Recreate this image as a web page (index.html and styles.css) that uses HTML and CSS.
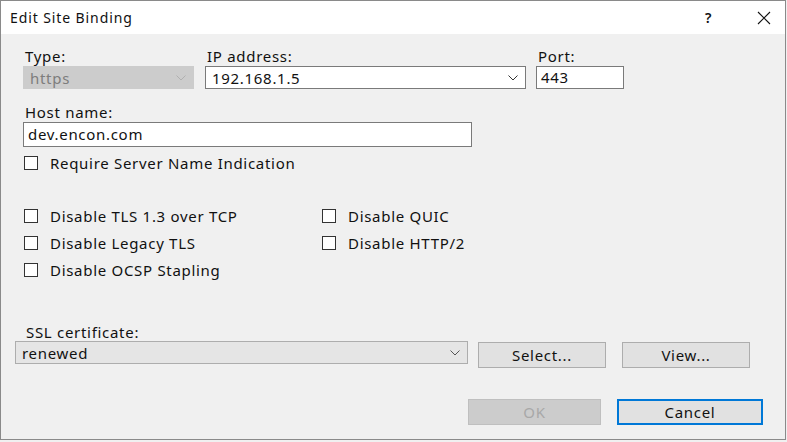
FILE: index.html
```html
<!DOCTYPE html>
<html>
<head>
<meta charset="utf-8">
<link rel="stylesheet" href="styles.css">
</head>
<body>
<div class="window">
  <div class="titlebar">
    <span class="title">Edit Site Binding</span>
    <span class="help">?</span>
    <span class="close">
      <svg width="14" height="14" viewBox="0 0 14 14"><path d="M1 1 L13 13 M13 1 L1 13" stroke="#111" stroke-width="1.1" fill="none"/></svg>
    </span>
  </div>
  <div class="content">
    <div class="row row-top">
      <div class="field f-type">
        <label class="lbl">Type:</label>
        <div class="select disabled"><span>https</span><span class="chev"><svg width="10" height="6" viewBox="0 0 10 6"><path d="M0.5 0.5 L5 5 L9.5 0.5" stroke="#b0b0b0" fill="none"/></svg></span></div>
      </div>
      <div class="field f-ip">
        <label class="lbl">IP address:</label>
        <div class="select white"><span>192.168.1.5</span><span class="chev"><svg width="10" height="6" viewBox="0 0 10 6"><path d="M0.5 0.5 L5 5 L9.5 0.5" stroke="#333" fill="none"/></svg></span></div>
      </div>
      <div class="field f-port">
        <label class="lbl">Port:</label>
        <div class="input port">443</div>
      </div>
    </div>
    <div class="field f-host">
      <label class="lbl">Host name:</label>
      <div class="input host">dev.encon.com</div>
    </div>
    <div class="check sni"><span class="box"></span><span>Require Server Name Indication</span></div>

    <div class="checks">
      <div class="check"><span class="box"></span><span>Disable TLS 1.3 over TCP</span></div>
      <div class="check"><span class="box"></span><span>Disable QUIC</span></div>
      <div class="check"><span class="box"></span><span>Disable Legacy TLS</span></div>
      <div class="check"><span class="box"></span><span>Disable HTTP/2</span></div>
      <div class="check"><span class="box"></span><span>Disable OCSP Stapling</span></div>
    </div>

    <div class="ssl">
      <label class="lbl">SSL certificate:</label>
      <div class="ssl-row">
        <div class="select gray"><span>renewed</span><span class="chev"><svg width="10" height="6" viewBox="0 0 10 6"><path d="M0.5 0.5 L5 5 L9.5 0.5" stroke="#555" fill="none"/></svg></span></div>
        <button class="btn sel">Select...</button>
        <button class="btn view">View...</button>
      </div>
    </div>

    <div class="footer">
      <button class="btn ok" disabled>OK</button>
      <button class="btn cancel">Cancel</button>
    </div>
  </div>
</div>
</body>
</html>
```
FILE: styles.css
```css
html, body {
  margin: 0;
  padding: 0;
  background: #f0f0f0;
}
body {
  font-family: "Noto Sans", "Open Sans", sans-serif;
  font-size: 15px;
  letter-spacing: 0.7px;
  color: #111;
}
.window {
  box-sizing: border-box;
  width: 786px;
  height: 440px;
  border: 1px solid #8a8a8a;
  background: #f0f0f0;
  display: flex;
  flex-direction: column;
}
.titlebar {
  height: 33px;
  background: #fff;
  display: flex;
  align-items: center;
  padding-left: 9px;
  font-size: 14px;
  letter-spacing: 0.9px;
}
.title { flex: 1; }
.help { width: 14px; margin-right: 38px; font-size: 14px; font-weight: 600; }
.close { width: 14px; margin-right: 14px; display: flex; }
.content {
  flex: 1;
  padding: 13px 0 0 0;
}
.row-top { display: flex; }
.field { display: flex; flex-direction: column; }
.lbl { display: block; line-height: 18px; height: 18px; padding-left: 2px; }
.f-type { margin-left: 22px; width: 171px; }
.f-ip { margin-left: 11px; width: 321px; }
.f-port { margin-left: 10px; width: 88px; }
.select {
  box-sizing: border-box;
  height: 23px;
  display: flex;
  align-items: center;
  padding-left: 6px;
  border: 1px solid #7a7a7a;
  margin-top: 1px;
}
.select > span:first-child { flex: 1; }
.chev { width: 17px; display: flex; align-items: center; }
.select.disabled { background: #cccccc; border-color: #cccccc; color: #7d7d7d; }
.select.white { background: #fff; border-color: #7a7a7a; }
.select.gray { background: #e5e5e5; border-color: #adadad; width: 453px; margin-top: 0; }
.input {
  box-sizing: border-box;
  height: 23px;
  line-height: 21px;
  border: 1px solid #7a7a7a;
  background: #fff;
  padding-left: 4px;
  margin-top: 1px;
}
.f-host { margin-left: 22px; margin-top: 14px; }
.input.host { width: 449px; height: 25px; line-height: 23px; }
.check { display: flex; align-items: center; height: 27px; }
.box {
  box-sizing: border-box;
  width: 14px;
  height: 14px;
  border: 1px solid #333;
  background: #fff;
  margin-right: 12px;
}
.sni { margin-left: 23px; margin-top: 2px; }
.checks {
  display: grid;
  grid-template-columns: 298px auto;
  margin-left: 23px;
  margin-top: 26px;
}
.ssl { margin-top: 40px; margin-left: 14px; }
.ssl .lbl { padding-left: 11px; }
.ssl-row { display: flex; align-items: flex-start; margin-top: 0; }
.btn {
  font-family: inherit;
  font-size: 15px;
  letter-spacing: 0.7px;
  color: #111;
  box-sizing: border-box;
  height: 26px;
  background: #e1e1e1;
  border: 1px solid #adadad;
  padding: 0;
}
.btn.sel { width: 128px; margin-left: 10px; margin-top: 1px; }
.btn.view { width: 128px; margin-left: 16px; margin-top: 1px; }
.footer { display: flex; justify-content: flex-end; margin-top: 31px; padding-right: 22px; }
.btn.ok { width: 133px; color: #a8a8a8; background: #cccccc; border-color: #bfbfbf; }
.btn.cancel { width: 146px; margin-left: 16px; border: 2px solid #0078d7; background: #e1e1e1; }
```
